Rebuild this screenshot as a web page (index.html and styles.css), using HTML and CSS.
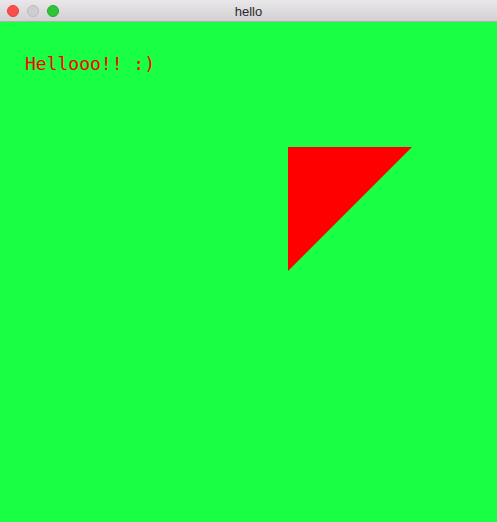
FILE: index.html
```html
<!DOCTYPE html>
<html>
<head>
<meta charset="utf-8">
<title>hello</title>
<link rel="stylesheet" href="styles.css">
</head>
<body>
<div class="window">
  <div class="titlebar">
    <div class="lights">
      <span class="light close"></span>
      <span class="light min"></span>
      <span class="light max"></span>
    </div>
    <div class="title">hello</div>
  </div>
  <div class="canvas">
    <div class="message">Hellooo!! :)</div>
    <svg class="tri" width="124" height="124" viewBox="0 0 124 124"><polygon points="0,0 124,0 0,124" fill="#ff0000"/></svg>
  </div>
</div>
</body>
</html>
```
FILE: styles.css
```css
html, body {
  margin: 0;
  padding: 0;
}
body {
  width: 497px;
  height: 522px;
  overflow: hidden;
  font-family: "Liberation Sans", Arial, sans-serif;
}
.window {
  display: flex;
  flex-direction: column;
  height: 522px;
}
.titlebar {
  position: relative;
  height: 21px;
  border-bottom: 1px solid #b1afb1;
  background: linear-gradient(#e9e7e9, #d2d0d2);
  display: flex;
  align-items: center;
  justify-content: center;
  flex: none;
}
.lights {
  position: absolute;
  left: 7px;
  top: 5px;
  display: flex;
  gap: 8px;
}
.light {
  width: 12px;
  height: 12px;
  border-radius: 50%;
  box-sizing: border-box;
}
.close { background: #fc4d4b; border: 1px solid #e0403d; }
.min { background: #cfcdcf; border: 1px solid #bdbbbd; }
.max { background: #2fc33a; border: 1px solid #25a92e; }
.title {
  font-size: 13px;
  color: #2a2a2a;
  margin-top: 1px;
}
.canvas {
  position: relative;
  flex: 1;
  background: #19ff43;
  padding: 31px 0 0 25px;
}
.message {
  font-family: "DejaVu Sans Mono", monospace;
  font-size: 18px;
  line-height: 22px;
  color: #ff0000;
}
.tri {
  position: absolute;
  left: 288px;
  top: 125px;
  display: block;
}
```
